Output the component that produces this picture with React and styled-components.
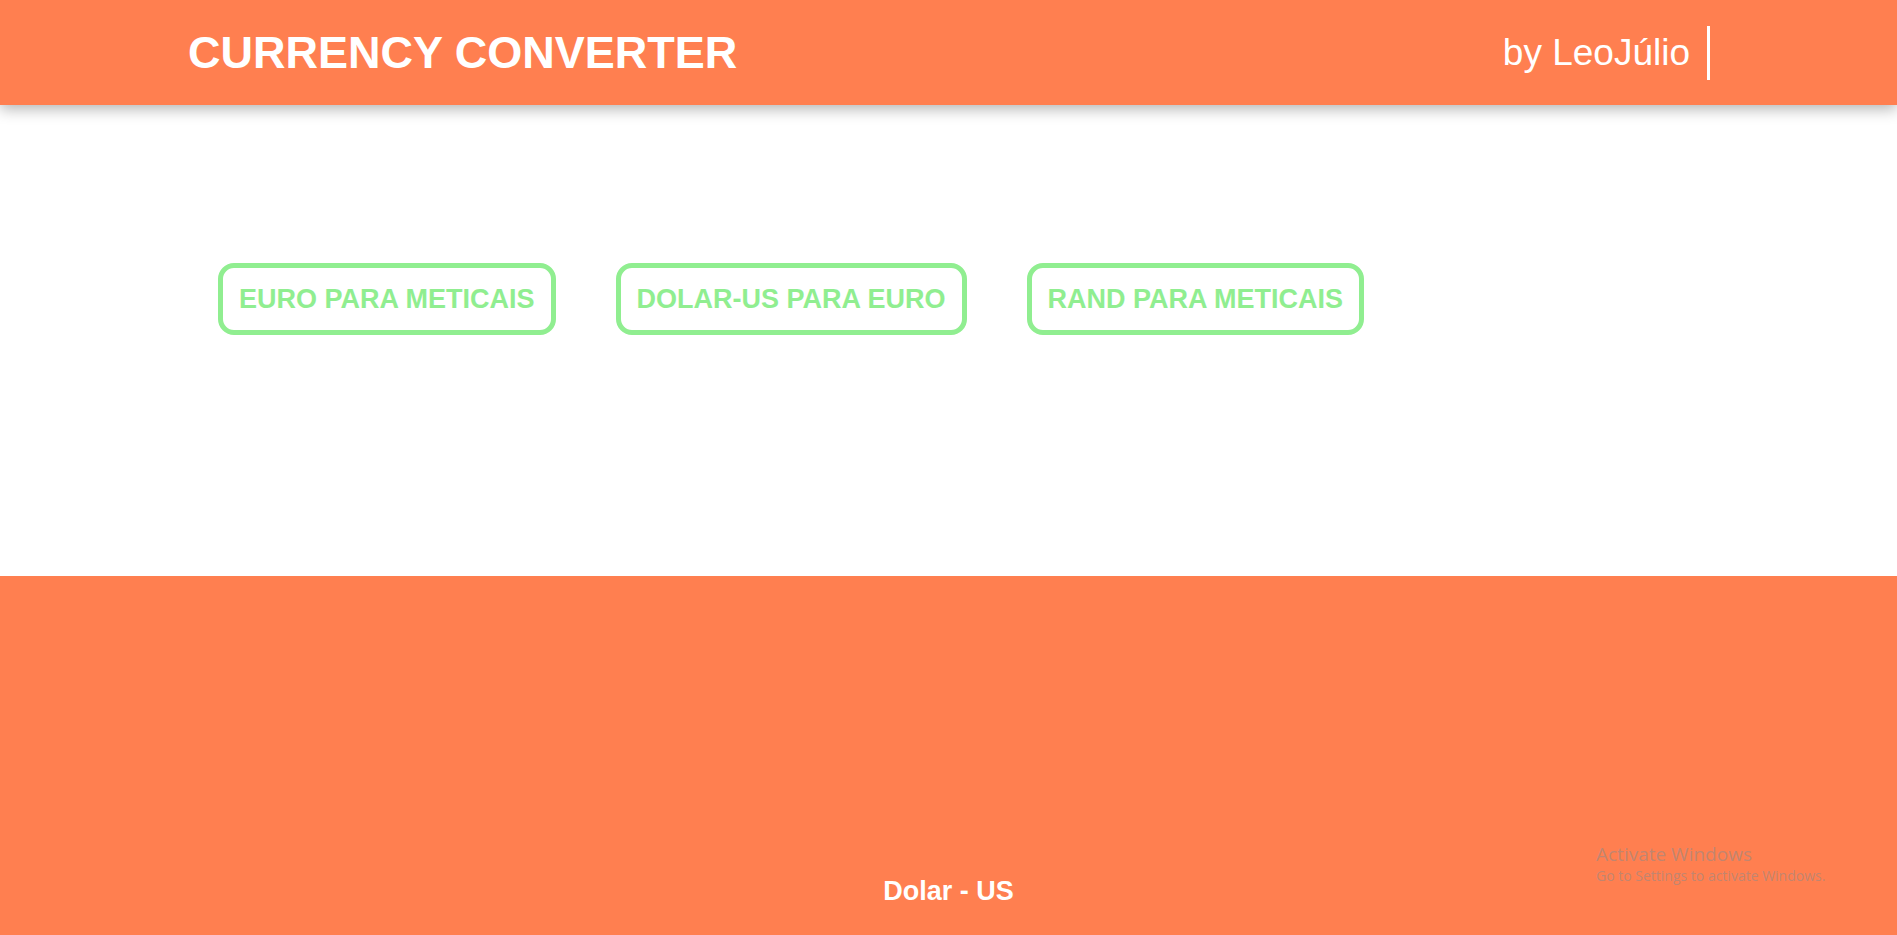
import React from 'react';
import styled, { createGlobalStyle } from 'styled-components';

const GlobalStyle = createGlobalStyle`
  * {
    box-sizing: border-box;
  }

  body {
    margin: 0;
    font-family: "Liberation Sans", Arial, sans-serif;
    background-color: #ffffff;
    overflow: hidden;
  }
`;

const Page = styled.div`
  display: flex;
  flex-direction: column;
  min-height: 100vh;
  position: relative;
`;

const Header = styled.header`
  display: flex;
  align-items: center;
  justify-content: space-between;
  height: 105px;
  padding: 0 187px 0 188px;
  background-color: #ff7f50;
  box-shadow: 0 4px 14px rgba(0, 0, 0, 0.3);
  position: relative;
  z-index: 1;
`;

const Title = styled.h1`
  margin: 0;
  font-size: 45px;
  font-weight: bold;
  color: #ffffff;
`;

const Author = styled.span`
  display: flex;
  align-items: center;
  height: 54px;
  padding-right: 17px;
  border-right: 3px solid #ffffff;
  font-size: 37px;
  color: #ffffff;
`;

const Main = styled.main`
  display: flex;
  align-items: flex-start;
  gap: 60px;
  height: 471px;
  padding: 158px 0 0 218px;
`;

const ConvertButton = styled.button`
  padding: 15px 16px;
  border: 5px solid #90ee90;
  border-radius: 16px;
  background-color: #ffffff;
  color: #90ee90;
  font-family: "Liberation Sans", Arial, sans-serif;
  font-size: 27px;
  font-weight: bold;
  line-height: 32px;
  cursor: pointer;
`;

const Footer = styled.footer`
  display: flex;
  align-items: flex-end;
  justify-content: center;
  flex: 1;
  min-height: 359px;
  padding-bottom: 28px;
  background-color: #ff7f50;
`;

const FooterText = styled.p`
  margin: 0;
  font-size: 27px;
  font-weight: bold;
  color: #ffffff;
`;

const Watermark = styled.div`
  position: absolute;
  left: 1596px;
  top: 842px;
  font-family: "Open Sans", "Noto Sans", sans-serif;
  color: rgba(140, 140, 140, 0.55);
`;

const WatermarkTitle = styled.div`
  font-size: 19px;
  line-height: 24px;
`;

const WatermarkText = styled.div`
  font-size: 14px;
  line-height: 20px;
`;

const conversions = ['EURO PARA METICAIS', 'DOLAR-US PARA EURO', 'RAND PARA METICAIS'];

const App = () => (
  <Page>
    <GlobalStyle />
    <Header>
      <Title>CURRENCY CONVERTER</Title>
      <Author>by LeoJúlio</Author>
    </Header>
    <Main>
      {conversions.map((label) => (
        <ConvertButton key={label}>{label}</ConvertButton>
      ))}
    </Main>
    <Footer>
      <FooterText>Dolar - US</FooterText>
    </Footer>
    <Watermark>
      <WatermarkTitle>Activate Windows</WatermarkTitle>
      <WatermarkText>Go to Settings to activate Windows.</WatermarkText>
    </Watermark>
  </Page>
);

export default App;
